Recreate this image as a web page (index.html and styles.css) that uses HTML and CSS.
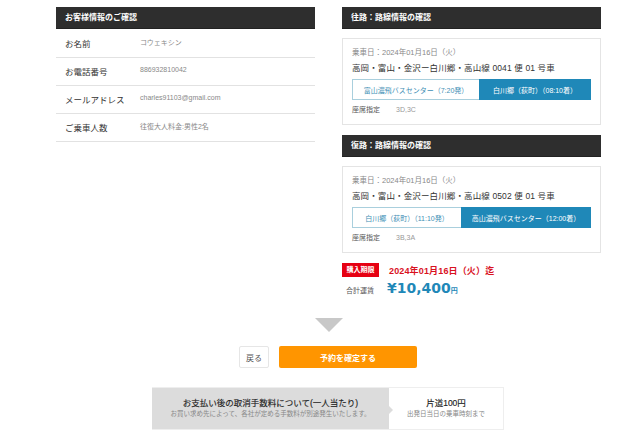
FILE: index.html
```html
<!DOCTYPE html>
<html lang="ja">
<head>
<meta charset="utf-8">
<title>予約確認</title>
<link rel="stylesheet" href="styles.css">
</head>
<body>
<main class="page">
  <div class="columns">
    <section class="col">
      <h2 class="bar">お客様情報のご確認</h2>
      <dl class="info">
        <div class="row"><dt>お名前</dt><dd>コウェキシン</dd></div>
        <div class="row"><dt>お電話番号</dt><dd>886932810042</dd></div>
        <div class="row"><dt>メールアドレス</dt><dd>charles91103@gmail.com</dd></div>
        <div class="row"><dt>ご乗車人数</dt><dd>往復大人料金:男性2名</dd></div>
      </dl>
    </section>
    <section class="col">
      <h2 class="bar">往路：路線情報の確認</h2>
      <div class="card">
        <p class="date">乗車日：2024年01月16日（火）</p>
        <p class="line">高岡・富山・金沢ー白川郷・高山線 0041 便 01 号車</p>
        <div class="route">
          <span class="stop from-a">富山濃飛バスセンター（7:20発）</span>
          <span class="stop to to-a">白川郷（荻町）（08:10着）</span>
        </div>
        <p class="seat"><span class="seat-label">座席指定</span><span class="seat-no">3D,3C</span></p>
      </div>
      <h2 class="bar bar-next">復路：路線情報の確認</h2>
      <div class="card">
        <p class="date">乗車日：2024年01月16日（火）</p>
        <p class="line">高岡・富山・金沢ー白川郷・高山線 0502 便 01 号車</p>
        <div class="route">
          <span class="stop from-b">白川郷（荻町）（11:10発）</span>
          <span class="stop to to-b">高山濃飛バスセンター（12:00着）</span>
        </div>
        <p class="seat"><span class="seat-label">座席指定</span><span class="seat-no">3B,3A</span></p>
      </div>
      <div class="deadline"><span class="tag">購入期限</span><span class="limit">2024年01月16日（火）迄</span></div>
      <div class="total"><span class="total-label">合計運賃</span><span class="price">¥10,400</span><span class="yen">円</span></div>
    </section>
  </div>
  <div class="arrow"></div>
  <div class="actions">
    <a class="back">戻る</a>
    <a class="confirm">予約を確定する</a>
  </div>
  <div class="notice">
    <div class="notice-main">
      <strong>お支払い後の取消手数料について(一人当たり)</strong>
      <span>お買い求め先によって、各社が定める手数料が別途発生いたします。</span>
    </div>
    <div class="notice-side">
      <strong>片道100円</strong>
      <span>出発日当日の乗車時刻まで</span>
    </div>
  </div>
</main>
</body>
</html>
```
FILE: styles.css
```css
* { box-sizing: border-box; }
html, body { margin: 0; padding: 0; background: #fff; }
body {
  width: 639px;
  height: 442px;
  overflow: hidden;
  font-family: "Liberation Sans", "Noto Sans CJK JP", sans-serif;
  color: #333;
}
p, h2, dl, dd { margin: 0; }
.page { padding-top: 7px; }
.columns { display: flex; gap: 27px; padding-left: 56px; }
.col { width: 259px; }
.bar {
  height: 22px;
  line-height: 21px;
  padding-left: 9px;
  background: #2e2e2e;
  color: #fff;
  font-size: 8px;
  font-weight: 700;
  border-bottom: 1px solid #222;
}
.bar-next { margin-top: 10px; }
.row {
  display: flex;
  align-items: center;
  height: 28px;
  padding-left: 9px;
  border-bottom: 1px solid #e2e2e2;
}
.info { margin-top: 1px; }
dt { width: 75px; font-size: 8.5px; color: #333; margin-top: -2px; }
dd { font-size: 7px; color: #888; margin-top: -4px; }
.card {
  height: 87px;
  margin-top: 9px;
  padding: 9px 9px 0;
  border: 1px solid #e4e4e4;
}
.date { font-size: 7.5px; line-height: 10px; color: #888; }
.line { margin-top: 5px; font-size: 8.5px; line-height: 10px; color: #333; letter-spacing: .12px; }
.route { display: flex; height: 21px; margin-top: 6px; }
.stop {
  display: flex;
  align-items: center;
  justify-content: center;
  font-size: 7px;
  color: #3f8fb5;
  border: 1px solid #a9cfdd;
  border-right: 0;
}
.to { color: #fff; background: #1f88b8; border: 0; }
.from-a { width: 127px; }
.to-a { width: 112px; }
.from-b { width: 109px; }
.to-b { width: 130px; }
.seat { margin-top: 5px; display: flex; font-size: 7px; line-height: 10px; }
.seat-label { width: 44px; color: #555; }
.seat-no { color: #999; }
.deadline { display: flex; align-items: center; margin-top: 10px; }
.tag {
  width: 37px;
  height: 14px;
  line-height: 14px;
  text-align: center;
  background: #e60012;
  color: #fff;
  font-size: 7px;
  font-weight: 700;
}
.limit { margin-left: 10px; font-size: 9px; font-weight: 700; color: #d9121f; letter-spacing: .15px; }
.total { display: flex; align-items: baseline; margin-top: 3px; padding-left: 4px; height: 20px; }
.total-label { width: 41px; font-size: 7px; color: #555; }
.price { font-family: "DejaVu Sans", sans-serif; font-size: 14px; font-weight: 700; color: #1f88b8; }
.yen { font-size: 7px; font-weight: 700; color: #1f88b8; }
.arrow {
  width: 0;
  height: 0;
  margin: 18px 0 0 315px;
  border-left: 14px solid transparent;
  border-right: 14px solid transparent;
  border-top: 14px solid #c8c8c8;
}
.actions { display: flex; gap: 10px; margin-top: 14px; padding-left: 239px; }
.back, .confirm {
  display: flex;
  align-items: center;
  justify-content: center;
  height: 22px;
  font-size: 8px;
  border-radius: 2px;
}
.back { width: 30px; color: #555; border: 1px solid #e6e6e6; }
.confirm { width: 138px; color: #fff; font-weight: 700; background: #ff9500; }
.notice {
  display: flex;
  width: 352px;
  height: 43px;
  margin: 19px 0 0 152px;
  text-align: center;
  border: 1px solid #eee;
  border-left: 0;
}
.notice strong { display: block; font-size: 8.5px; line-height: 11px; font-weight: 400; color: #222; -webkit-text-stroke: .15px #222; }
.notice span { display: block; font-size: 6.5px; line-height: 10px; color: #888; }
.notice-main {
  position: relative;
  width: 237px;
  padding-top: 10px;
  background: #dcdcdc;
}
.notice-main::after {
  content: "";
  position: absolute;
  right: -4px;
  top: 18px;
  border-left: 4px solid #dcdcdc;
  border-top: 4px solid transparent;
  border-bottom: 4px solid transparent;
}
.notice-side { flex: 1; padding-top: 10px; }
```
